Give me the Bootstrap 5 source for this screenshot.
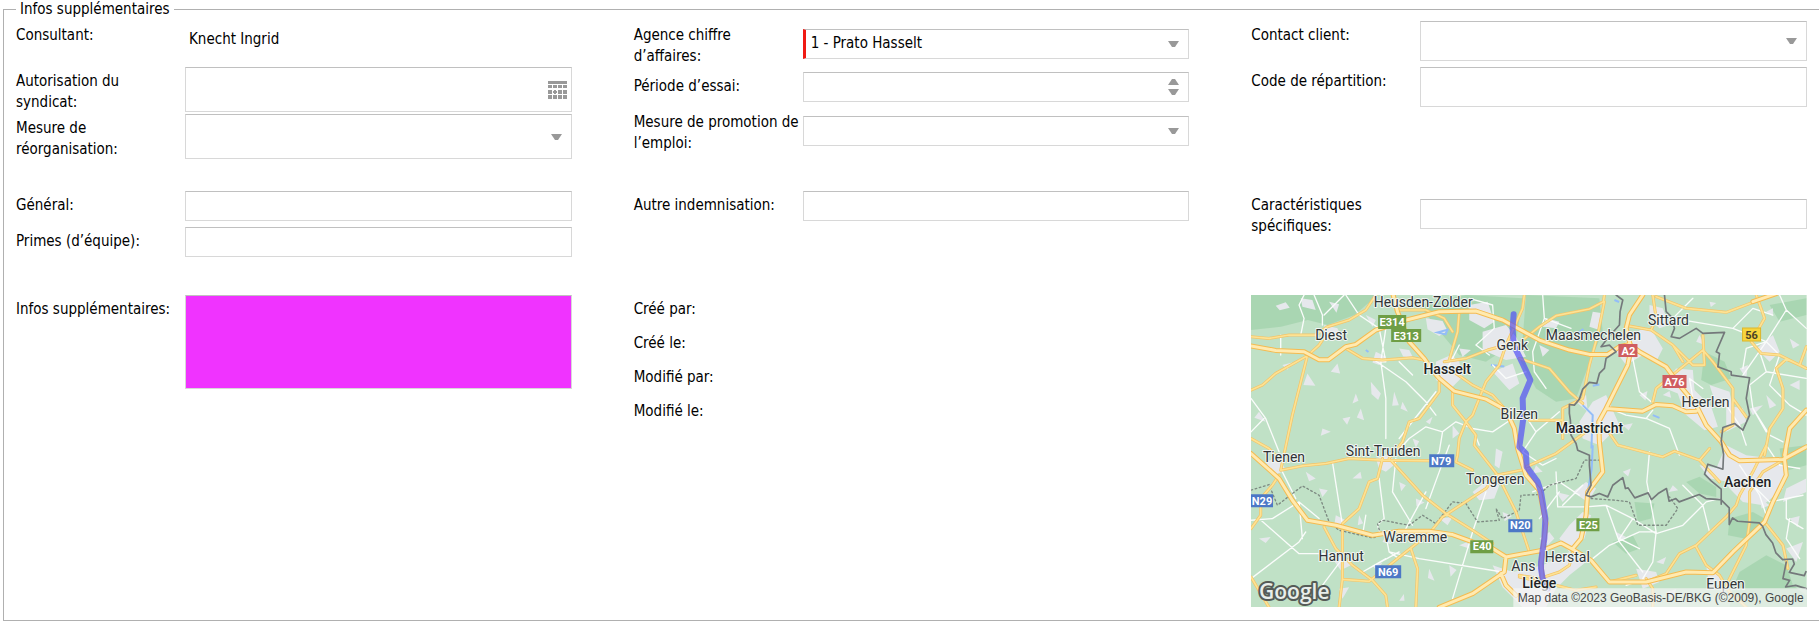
<!DOCTYPE html>
<html lang="fr">
<head>
<meta charset="utf-8">
<meta name="viewport" content="width=device-width, initial-scale=1">
<title>Infos supplémentaires</title>
<link href="https://cdn.jsdelivr.net/npm/bootstrap@5.3.0/dist/css/bootstrap.min.css" rel="stylesheet">
<style>
  body { font-family: "DejaVu Sans Condensed", "DejaVu Sans", sans-serif; font-size: 15px; line-height: 21px; color: #000; background: #fff; }
  .info-set { margin-left: 3px; border: 1px solid #b0b0b0; border-right: 0; padding: 2px 12px 13px 12px; }
  .info-set > legend { float: none; width: auto; margin: 0; padding: 0 4px; font-size: 15px; line-height: 19px; }
  .info-section { --bs-gutter-x: 62px; }
  .info-section + .info-section { margin-top: 32px; }
  .info-section.info-last { margin-top: 38px; }
  .stack { display: flex; flex-direction: column; gap: 6px; }
  .stack-tight { gap: 2px; }
  .field { display: flex; min-height: 30px; }
  .field-tall { min-height: 40px; }
  .field-note { min-height: 28px; }
  .field-label { flex: 0 0 169px; padding-top: 4px; margin-bottom: -1px; }
  .box { flex: 1 1 0; min-width: 0; display: flex; height: auto; border: 1px solid #d8d8d8; border-top-color: #c0c0c0; border-radius: 0; background-color: #fff; color: #000; padding: 0 5px; font-size: 15px; line-height: 21px; }
  .box-line { align-self: center; height: 30px; }
  .box-required { border-left: 3px solid #f01a14; }
  select.box { appearance: none; padding-right: 28px; background: #fff url("data:image/svg+xml,%3Csvg xmlns='http://www.w3.org/2000/svg' width='11' height='6'%3E%3Cpath d='M0 0h11L7 6H4z' fill='%23999'/%3E%3C/svg%3E") no-repeat right 9px center; }
  .box > input { flex: 1 1 0; min-width: 0; border: 0; padding: 0; background: transparent; appearance: textfield; }
  .box > input::-webkit-inner-spin-button { display: none; }
  .icon-btn { border: 0; padding: 0; background: transparent; display: flex; }
  .spinner-col { display: flex; flex-direction: column; justify-content: center; gap: 4px; padding-right: 4px; }
  .box-note { height: 94px; background: #f033ff; resize: none; }
  .map { display: block; width: 100%; height: auto; font-family: Roboto, sans-serif; }
  .urban { fill: #e6e8ec; } .forest { fill: #9fd2a9; opacity: .7; }
  .water { fill: none; stroke: #93bdf8; stroke-width: 6; }
  .ln { fill: none; stroke-linejoin: round; stroke-linecap: round; }
  .local { stroke: #fafcfb; stroke-width: 4; }
  .sec-edge { stroke: #f3c468; stroke-width: 9; } .sec-fill { stroke: #fde293; stroke-width: 5; }
  .hw-edge { stroke: #f5bb50; stroke-width: 15; } .hw-fill { stroke: #ffeab0; stroke-width: 9; }
  .country { stroke: #74797b; stroke-width: 5; } .region { stroke: #7d8a82; stroke-width: 4; stroke-dasharray: 5 8; }
  .route { stroke: #5350f5; stroke-width: 18; opacity: .7; }
  .town { font-size: 14px; fill: #303336; text-anchor: middle; paint-order: stroke; stroke: #f1f6f3; stroke-width: 2px; stroke-linejoin: round; }
  .city { font-weight: 500; font-size: 14px; fill: #202124; }
  .shield { font-size: 11px; font-weight: 700; fill: #fff; text-anchor: middle; }
  .brand { font-family: "Open Sans", sans-serif; font-size: 21px; font-weight: 600; fill: #e9eeea; stroke: #555b57; stroke-width: 4px; paint-order: stroke; stroke-linejoin: round; }
  .credit { font-size: 12px; fill: #444; text-anchor: end; font-family: "Liberation Sans", sans-serif; }
</style>
</head>
<body>
<form>
<fieldset class="info-set">
  <legend>Infos supplémentaires</legend>

  <div class="row row-cols-3 info-section">
    <div class="col stack">
      <div class="field field-tall">
        <label class="field-label" for="consultant">Consultant:</label>
        <output id="consultant" class="align-self-center ps-1 pb-1">Knecht Ingrid</output>
      </div>
      <div class="stack stack-tight">
        <div class="field">
          <label class="field-label" for="syndicat">Autorisation du<br>syndicat:</label>
          <div class="box pe-1 align-items-center">
            <input id="syndicat" type="text">
            <button type="button" class="icon-btn" aria-label="Choisir une date">
              <svg width="19" height="18" fill="#999"><path d="M0 0h19v3H0zM0 4h4v3H0zM5 4h4v3H5zM10 4h4v3h-4zM15 4h4v3h-4zM0 9h4v4H0zM10 9h4v4h-4zM15 9h4v4h-4zM6 9h2v1h1v2H8v1H6v-1H5v-2h1zM0 14h4v4H0zM5 14h4v4H5zM10 14h4v4h-4zM15 14h4v4h-4z"/></svg>
            </button>
          </div>
        </div>
        <div class="field">
          <label class="field-label" for="reorg">Mesure de<br>réorganisation:</label>
          <select id="reorg" class="box"><option></option></select>
        </div>
      </div>
    </div>
    <div class="col stack">
      <div class="field">
        <label class="field-label" for="agence">Agence chiffre<br>d’affaires:</label>
        <select id="agence" class="box box-line box-required"><option>1 - Prato Hasselt</option></select>
      </div>
      <div class="field">
        <label class="field-label" for="essai">Période d’essai:</label>
        <div class="box">
          <input id="essai" type="number">
          <div class="spinner-col">
            <button type="button" class="icon-btn" aria-label="Augmenter"><svg width="11" height="6"><path d="M4 0h3l4 6H0z" fill="#999"/></svg></button>
            <button type="button" class="icon-btn" aria-label="Diminuer"><svg width="11" height="6"><path d="M0 0h11L7 6H4z" fill="#999"/></svg></button>
          </div>
        </div>
      </div>
      <div class="field">
        <label class="field-label" for="promotion">Mesure de promotion de<br>l’emploi:</label>
        <select id="promotion" class="box box-line"><option></option></select>
      </div>
    </div>
    <div class="col stack">
      <div class="field field-tall">
        <label class="field-label" for="contact">Contact client:</label>
        <select id="contact" class="box"><option></option></select>
      </div>
      <div class="field field-tall">
        <label class="field-label" for="code">Code de répartition:</label>
        <input id="code" type="text" class="box">
      </div>
    </div>
  </div>

  <div class="row row-cols-3 info-section">
    <div class="col stack">
      <div class="field">
        <label class="field-label" for="general">Général:</label>
        <input id="general" type="text" class="box">
      </div>
      <div class="field">
        <label class="field-label" for="primes">Primes (d’équipe):</label>
        <input id="primes" type="text" class="box">
      </div>
    </div>
    <div class="col stack">
      <div class="field">
        <label class="field-label" for="autre">Autre indemnisation:</label>
        <input id="autre" type="text" class="box">
      </div>
    </div>
    <div class="col stack">
      <div class="field">
        <label class="field-label" for="caract">Caractéristiques<br>spécifiques:</label>
        <input id="caract" type="text" class="box box-line">
      </div>
    </div>
  </div>

  <div class="row row-cols-3 info-section info-last">
    <div class="col">
      <div class="field">
        <label class="field-label" for="infos">Infos supplémentaires:</label>
        <textarea id="infos" class="box box-note"></textarea>
      </div>
    </div>
    <div class="col stack">
      <div class="field field-note"><span class="field-label">Créé par:</span></div>
      <div class="field field-note"><span class="field-label">Créé le:</span></div>
      <div class="field field-note"><span class="field-label">Modifié par:</span></div>
      <div class="field field-note"><span class="field-label">Modifié le:</span></div>
    </div>
    <div class="col">
      <svg class="map" viewBox="0 0 555 312" role="img" aria-label="Itinéraire de Genk à Liège">
        <defs>
          <path id="secondary" d="M36 155l54 5 60-10h80l35-25 65-20 50-30 30-45M36 315l34-15 40-35 95-53 35-32 20-30M205 212l-45 178-35 165M320 190l50 30 60 5 90-7 35 7M630 225l25-85 5-60M470 75h90l55 25 25 40M615 230l65-10 65-25 55-15M600 290v30l-60 80-30 10-20 60-40 50M640 320v40l40 50 30 40-5 30 70 90 55 110 20 60 20 60M855 30l-5 40-50 110-20 60-40 50-40 100-20 20-20 50-5 50-5 20 50 25M650 265l50 35 60 30 40 45M36 460l54 30 30 30M850 165l50-40 50-33 100-20 42-22 3-20M1095 50l-20 100-25 90-20 100-60 30v90M840 220l90 30 60 70 40 35M1250 35l90 35 120 12 80-30M1240 30l10 70-15 35-65-12M1235 135l65 45 60 60h35l-5-90M1300 180l30 50M1240 350l10-40 140-115 30 35 60 80v110l-35 20M1480 340l40 55M1550 30l25 70-40 70 30 35 55 5 80 40M1700 185l-20 55-40-18-30 28 20 60v60l-40 60-15 80M1580 480l-40 80-40 70-10 30-30 35-90 85-50 25-40 60-60 25M1370 785l30 55 40 30M1630 525l-60 35-40 60v90l-10 70-55 110M1575 710l55 70 15 70M870 405h100M860 545l90-40 90-65 40-20M1100 430l35 50 135 35 35-17 75 27 30-35M1380 525l60 65M125 555l65-13 70-7 70-15 100 5 150 2M430 520l-15 60-25 10-30 80-50 45v165l-10 86M255 725l35 65 50 50 60 45 40 45 5 36M310 882l80 6 110-88 70-55 40-50 130-85 30-40 100-20M515 790l20 60-5 116M455 525l95 105 70 55 80 50 60 40M120 570l-20 30-35 40v50l-29 40M36 875l54 91M1220 880l20 30v56M1110 890l80-20M840 870l60 10 60-20 30-20 10-40M840 875l110 25 60 15 60-10M1440 870l30 50 50 46"/>
          <path id="highway" d="M36 183l74 13 85 4 45 24h28l52-39 30-7 60-43 95-31 95-24 110-2 80 27 110 60 90 30 60 13h55l35-23 30-7 30 22 80 45 40 55 50 60 30 60 45 50 25 40 30 17 130-4 70-38M462 30l13 50 35 90 45 50 20 30 25 30 45 38 95 24 60 33 25 55 10 60 25 80 40 45 20 100-15 120 5 60M1210 30l-40 60-10 40 15 60-10 50-35 70-30 60-22 40 2 60 10 90-45 60-5 70-15 70-25 30M1100 370l110 8 40-20 50 4 40 18 30-2M36 505l84 75 40 65 45 60 85 15 110 30 80-12h90l70 10 60 22 60 20 40 25 110-20 55-22 40 22 50 30 55 65h110l120-30 80 2 60-62 95-90 25-60 40-80-5-45 5-45M800 815l-5 45-95 65-100 41M785 865l15 35 30 30M1700 375l-50 55-15 80M1540 50l70-24"/>
        </defs>
        <rect width="555" height="312" fill="#c0e1c6"/>
        <g transform="translate(-12 -10) scale(.33333)">
          <path class="forest" d="M36 30h380l-70 60-80 30-60-15-80 20-90 10zM860 30l220 10 10 100-50 120-30 80-60 10-60-40-45-80zM540 60l140-30 170 10-20 130-90 60-80-20-50-60zM1395 200l60 30 20 50-60 20-30-15zM1185 650l60 5-10 45-40 10zM1340 590l40-15 50 30v30l-50-10zM1470 700l70-20 35 20-60 60-50-10zM1500 860l80-50 60 30 20 60 40 30v36h-230l10-60zM1590 60l110-20v50l-80 20zM1120 770l60-20 20 40-40 15zM1620 490l80-10v60l-70 20z"/>
          <path class="urban" d="M185 40l35 5 10 30-40-10zM110 62l30-10 12 16-30 8zM270 50l30 8-8 25zM380 90l30 15-10 20zM255 120l40 10 15 30-45 5zM560 100l50 8 15 30-25 15-35-20zM480 190l30 5 12 24-30-5zM590 230l45-20 25 20 10 45-35 35-45-25zM690 60l55-10 20 60-30 20-45-25zM730 140l70-20 30 35 30 60-60 10-70-30zM760 260l60-25 20 60-30 20zM660 190l35 5-25 20zM410 200l30 15-20 25-20-8zM295 235l-20 25 28 5zM205 265l-12 35 36 2zM395 290l30 35-8 20-20-18zM350 325l-10 30 18-8zM465 320l14 40-20 2zM490 350l16 30-22-10zM365 370l10 35-22-8zM250 430l25 10-30 12zM310 400l24-5-10 24zM130 240l30-8-15 22zM60 380l20 30-34-12zM560 410l20-15-8 22zM640 420l20 25-20 15zM520 460l20 8-10 20zM410 520l40-15 20 30-30 25-20-10zM80 530l40-15 20 40-35 15zM60 760l35-5-15 18zM240 610l26 5-16 20zM200 560l30 20-20 8zM340 580l24-20 4 20zM360 690l-4 30 16-6zM480 590l20 10-14 18zM530 640l26 12-24 12zM600 700l40-5-15 25zM440 750l-10 20 26 6zM290 690l30 15-8 20-26-8zM280 820l35-10 20 30-30 15zM300 910l30-4-20 34zM480 946l14-20 2 20zM400 840l30-8-18 24zM570 850l16 36-20-8zM630 840l22 14-18 20zM700 620l50-40 30 20-15 40-45 5zM770 490l20 10-10 50-14-10zM790 680l28 12-22 16zM660 780l24-10 6 20zM760 840l60 20 90-20 80-40 50 30-50 40-40 40-30 56H850l-60-60zM960 760l30-40 40-40 25 10-20 70-45 40zM900 760l30-20 15 20-20 20zM1000 620l40-30 30 20-25 40zM1060 350l40-20 40 90-60 60-50-20-10-50zM1010 350l30-20 5 50zM1180 150l30-20 30 10 30 50-20 40-40-20-50 30-30-40zM1230 60l40 10 20 50-30 10-30-30zM1060 80l30 5-10 50-30-10zM920 100l40 10-10 20-40-5zM900 180l30 15-20 20zM1310 250l50 5 5 60 50 50 20 60-40 10-60-50-20-60-50-20zM1460 360l50 10 10 40-60 30zM1410 300l60 20 10 50-50-10zM1380 150l16 30-26-10zM1270 330l20-12 5 20zM1200 330l24-12-6 28zM1150 420l30-6-12 22zM1500 250l25-10-5 40zM1550 190l50-40 20 50-30 30zM1580 330l30 30-20 10zM1650 160l30 20-20 10zM1650 300l30-15v30zM1530 370l40-10-30 30zM1460 480l60 30 80 10 40 30-10 60-60 50-60-10-40-40-40-60zM1380 540l60 10 30 40-60-10zM1640 610l60-30v40l-70 30zM1650 700l30-8-6 34zM1560 640l30 20-24 10zM1640 790l50-20-20 60zM1400 840l60 50-50 20zM1190 850l60 10 10 30-50 20zM1280 920l30-8-10 28zM1130 740l30 15-22 12zM1250 830l30-15-8 22zM1150 560l24-10-8 24zM1300 600l-12 20 28-5zM950 620l40 10-20 20zM890 540l20 20-30 5zM1580 80l20-10v24zM1410 50l20 4-16 12z"/>
          <path class="water" d="M595 142l30-8-6 14zM380 195l8 6M755 240l40 4M1030 360l30 30-4 100M1060 480l-3 70-20 120M1125 45l14 6M1060 302l20-4M1240 390l20 8M1020 140l12-8"/>
          <path class="ln local" d="M195 30l-15 30 15 40-10 50M225 30l25 60v30M315 30l-60 60M320 30l40 60 60 40 20 100-15 0 15 110v120M440 130l-15 100M410 228l90 62 60 60 30 40M36 340l44 60 40 100M36 440l39-40M590 320L480 460M465 510l45-50 50-35 50 15 40-30 50 20 60 10 60-40M610 440l-10 60-20 30M760 240l40 40 60-20M690 40l70 20 5 70-55 50 40 30M125 150v60M480 230l40 40M660 180l-40 80M700 430l20 50M910 30l5 70-35 100 5 60 35 50M915 100l80 30M850 380l40 60-40 60 60 40 40-20M890 440l70-60M1180 220l20 100 35 30M1110 370l50 20 60 10 20-25M1220 400l70 30 30 80M1360 40l-60 60 180 30 100 40 40 40M1620 30l20 45-60 95-70 100M1640 75l60 55M1480 130l60-60 60 20M1560 200l20 60-50 40 10 70 40 70M1620 210l-30 90 60 60 50 30M1580 260l120 20M1540 370l50 80 40 20M1460 360l40 60 20 60M1390 310l-40-30 10 60M1580 170l-60 20-10 60M1230 500l-8 90 28 150-10 90-30 50M950 560l5 105h85l60-5 80 40 70 45 80-25 70-70 40-10M1100 660l40 110 70 90M1060 820l50-40 90-40h50M1330 600l60 60 20 80M1180 700l-40 60 60 30M1540 600l50 50 100-20M1640 640v60l50 30M1650 700l-10 60 40 60M1500 540l60 90 20 60M36 705l64-5 80-50 10 110M60 700l120 105h130M36 880l144-110 20-30M280 530l30 190M130 560l40 80M180 650l60 50M370 860l110-60M370 860l70-40M425 750l-10-30 20-20-15-120M500 730l60-110M560 670l40-110 30-80M740 620l-40 120-60 200M450 800l90 20 250 40M250 900l60-80M380 690l-10 60M440 750l10 50 30 20M470 520l-10 100 60 100M1030 600l-60 60M880 620l80-30 60 40M1160 900l60-20M1580 480l40 60 60 10M900 700l60-80"/>
          <path class="ln region" d="M36 615l54-17 25 62 75-58 50 28 30 80 30 25 100 23 25-8-10-35 15-10 80 15 40-30 40 25 50-65 40 5 35 55 65-5-10-35 20 30 50-25 5-45 55-2 30-28 80-20 25-55h45M1055 640l75 5 40 5 25 70h85l35-50-25-35"/>
          <use href="#secondary" class="ln sec-edge"/><use href="#secondary" class="ln sec-fill"/>
          <use href="#highway" class="ln hw-edge"/><use href="#highway" class="ln hw-fill"/>
          <path class="ln country" d="M1130 30l20 15-8 35-2 40-32 35-23 30 25-5 20 20-30 20-5 30-15 15-8 30-22-3-20 20-10 30-15 18-15-2v27l3 20 2 45 15 25 5 20 35 15v30l5 60-15 30 15 5 25-10 25 10 15-35 30-23 8 33 8-2 20 30 40-15 10 20 20-18 25-15 8 38 20-8 10 10 60-22 20 12 45 3 25 25v50l10-20 15 10 65 5 10 10 10 25 20 25 10 30 20 20 30-2 5 15-15 25 45 10 5-12M1640 830l-10 50 20 5-12 20 30-5 32 10M1275 30l5 50 15 15 10 35-10 25 25 5 50-30 20 15 65-3-25 58 10 5-5 40 40 15v10l55 8-10 62 10 50-20 45-25-20-35 12-5 40 7 40-2 45-45-15-10 30 20 20 30 25v45"/>
          <path class="ln route" d="M823 88l-3 42 3 50 27 55 23 50-23 55 2 60-12 85 20 20 2 40 33 45 10 30 13 80-3 60-10 70v20l5 30 15 30"/>
        </g>
        <g>
          <g fill="#6f9e45"><path d="M127 20h28v14h-28zM140 34h30v13h-30zM219 245h23v13h-23zM325 223h23v13h-23z"/></g>
          <g fill="#4c78c6"><path d="M178 159h25v13h-25zM0 199h22v13H0zM257 224h24v13h-24zM124 270h26v13h-26z"/></g>
          <g fill="#cf5c5f"><path d="M367 49h19v13h-19zM411 80h24v13h-24z"/></g>
          <path d="M491 33h18v13h-18z" fill="#f8d53c" stroke="#dcb52a"/>
          <g class="shield">
            <text x="141" y="31">E314</text><text x="155" y="45">E313</text><text x="231" y="255">E40</text><text x="337" y="234">E25</text>
            <text x="190" y="170">N79</text><text x="11" y="210">N29</text><text x="269" y="234">N20</text><text x="137" y="281">N69</text>
            <text x="377" y="60">A2</text><text x="423" y="91">A76</text><text x="500" y="44" fill="#4a4326">56</text>
          </g>
          <g class="town">
            <text x="172" y="12">Heusden-Zolder</text><text x="80" y="45">Diest</text><text x="261" y="55">Genk</text><text x="268" y="124">Bilzen</text>
            <text x="342" y="45">Maasmechelen</text><text x="417" y="30">Sittard</text><text x="454" y="112">Heerlen</text><text x="33" y="167">Tienen</text>
            <text x="132" y="161">Sint-Truiden</text><text x="244" y="189">Tongeren</text><text x="164" y="247">Waremme</text><text x="90" y="266">Hannut</text>
            <text x="272" y="276">Ans</text><text x="316" y="267">Herstal</text><text x="474" y="294">Eupen</text>
            <text class="city" x="196" y="79">Hasselt</text><text class="city" x="338" y="138">Maastricht</text><text class="city" x="496" y="192">Aachen</text><text class="city" x="288" y="293">Liège</text>
          </g>
          <path d="M262 293h293v19H262z" fill="#f5f5f5" opacity=".7"/>
          <text class="credit" x="552" y="307">Map data ©2023 GeoBasis-DE/BKG (©2009), Google</text>
          <text class="brand" x="8" y="304">Google</text>
        </g>
      </svg>
    </div>
  </div>
</fieldset>
</form>
<script src="https://cdn.jsdelivr.net/npm/bootstrap@5.3.0/dist/js/bootstrap.bundle.min.js"></script>
</body>
</html>
